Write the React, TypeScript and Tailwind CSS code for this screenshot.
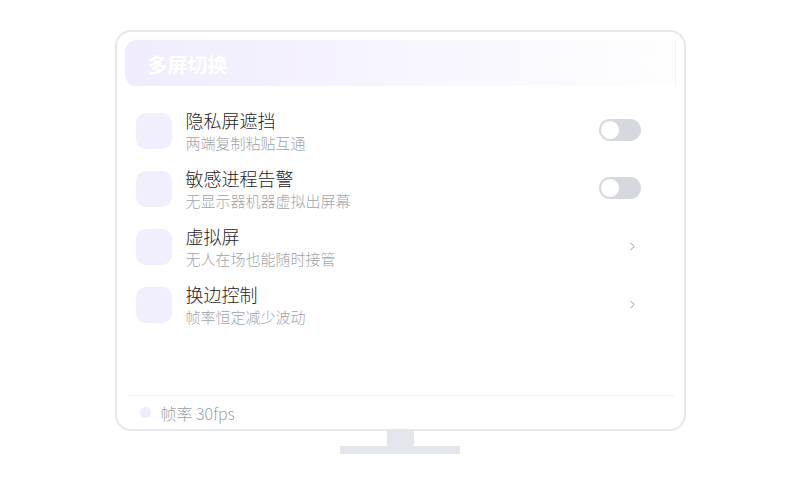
import { ChevronRight } from "lucide-react"

type Row = {
  title: string
  desc: string
  kind: "toggle" | "link"
}

const rows: Row[] = [
  { title: "隐私屏遮挡", desc: "两端复制粘贴互通", kind: "toggle" },
  { title: "敏感进程告警", desc: "无显示器机器虚拟出屏幕", kind: "toggle" },
  { title: "虚拟屏", desc: "无人在场也能随时接管", kind: "link" },
  { title: "换边控制", desc: "帧率恒定减少波动", kind: "link" },
]

function Toggle() {
  return (
    <div className="flex h-[22px] w-[42px] items-center rounded-full bg-[#d5d8de] p-[1px]">
      <div className="h-[20px] w-[20px] rounded-full border border-[#d5d8de] bg-white" />
    </div>
  )
}

function SettingRow({ row }: { row: Row }) {
  return (
    <div className="flex h-[58px] items-start">
      <div className="mt-[1px] h-9 w-9 shrink-0 rounded-[10px] bg-[#f1eefd]" />
      <div className="ml-[14px] -mt-[4px] flex flex-1 flex-col gap-[1px] font-light">
        <span className="text-[18px] leading-[24px] text-[#1f2328]">{row.title}</span>
        <span className="text-[15px] leading-[20px] text-[#a0a4ab]">{row.desc}</span>
      </div>
      {row.kind === "toggle" ? (
        <div className="mt-[7px]">
          <Toggle />
        </div>
      ) : (
        <div className="mr-[2px] mt-[12px] text-[#7f858e]">
          <ChevronRight size={13} strokeWidth={1.6} />
        </div>
      )}
    </div>
  )
}

export default function App() {
  return (
    <div
      className="flex h-[500px] w-[800px] flex-col items-center bg-white pt-[30px]"
      style={{ fontFamily: '"Noto Sans CJK SC", "Noto Sans", sans-serif' }}
    >
      <div className="flex h-[401px] w-[571px] flex-col rounded-[16px] border-2 border-[#e4e7eb] bg-white p-2 pb-0">
        <header className="flex h-[46px] items-center justify-between rounded-[12px] bg-gradient-to-r from-[#f0ecfd] via-[#f7f5fe] to-[#fefeff] pl-[23px]">
          <span className="pt-[3px] text-[20px] font-bold text-white">多屏切换</span>
          <div className="flex h-full w-[54px] items-center justify-center border-r border-[#f3f4f6] text-[16px] text-white">
            切换
          </div>
        </header>

        <div className="flex flex-1 flex-col pl-[11px] pr-[35px] pt-[26px]">
          {rows.map((r) => (
            <SettingRow key={r.title} row={r} />
          ))}
        </div>

        <div className="mx-[2px] border-t border-[#eef0f3]" />
        <footer className="flex h-[33px] items-center gap-[10px] pl-[15px] font-light">
          <div className="h-[11px] w-[11px] rounded-full bg-[#efebfd]" />
          <span className="text-[16px] leading-[20px] text-[#9ca1a8]">帧率 30fps</span>
        </footer>
      </div>
      <div className="h-[15px] w-[27px] bg-[#e3e7eb]" />
      <div className="h-[8px] w-[120px] bg-[#e3e7eb]" />
    </div>
  )
}
